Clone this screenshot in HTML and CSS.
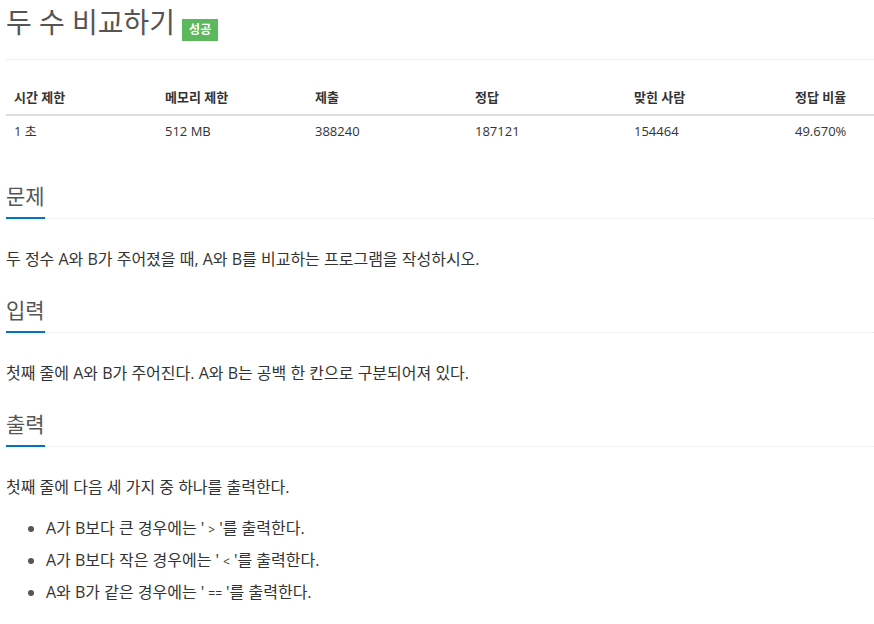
FILE: index.html
```html
<!DOCTYPE html>
<html lang="ko">
<head>
	<meta charset="UTF-8">
	<title>두 수 비교하기</title>
	<link rel="stylesheet" href="styles.css">
</head>
<body>
	<div class="page">
		<div class="page-header">
			<h1><span class="title">두 수 비교하기</span><span class="label">성공</span></h1>
		</div>
		<table class="info">
			<thead>
				<tr>
					<th class="c1">시간 제한</th>
					<th class="c2">메모리 제한</th>
					<th class="c3">제출</th>
					<th class="c4">정답</th>
					<th class="c5">맞힌 사람</th>
					<th class="c6">정답 비율</th>
				</tr>
			</thead>
			<tbody>
				<tr>
					<td>1 초</td>
					<td>512 MB</td>
					<td>388240</td>
					<td>187121</td>
					<td>154464</td>
					<td>49.670%</td>
				</tr>
			</tbody>
		</table>

		<section class="problem">
			<div class="headline"><h2><span>문제</span></h2></div>
			<div class="text">
				<p>두 정수 A와 B가 주어졌을 때, A와 B를 비교하는 프로그램을 작성하시오.</p>
			</div>
		</section>

		<section class="problem">
			<div class="headline"><h2><span>입력</span></h2></div>
			<div class="text">
				<p>첫째 줄에 A와 B가 주어진다. A와 B는 공백 한 칸으로 구분되어져 있다.</p>
			</div>
		</section>

		<section class="problem">
			<div class="headline"><h2><span>출력</span></h2></div>
			<div class="text">
				<p>첫째 줄에 다음 세 가지 중 하나를 출력한다.</p>
				<ul>
					<li>A가 B보다 큰 경우에는 '<code>&gt;</code>'를 출력한다.</li>
					<li>A가 B보다 작은 경우에는 '<code>&lt;</code>'를 출력한다.</li>
					<li>A와 B가 같은 경우에는 '<code>==</code>'를 출력한다.</li>
				</ul>
			</div>
		</section>
	</div>
</body>
</html>
```

FILE: styles.css
```css
*{margin: 0;padding: 0;box-sizing: border-box;}
body{background: #fff;color: #333;font-family: "Open Sans", "Noto Sans CJK KR", sans-serif;font-size: 13px;}
.page{padding: 0 0 0 6px;}

.page-header{padding: 4px 0 19px;border-bottom: 1px solid #eee;}
.page-header h1{display: flex;align-items: flex-end;font-weight: 400;}
.page-header .title{font-size: 28px;color: #555;line-height: 36px;}
.page-header .label{display: inline-block;margin: 0 0 -1px 7px;background: #5cb85c;color: #fff;font-size: 12px;font-weight: 700;line-height: 22px;padding: 0 7px;}

.info{width: 868px;margin: 20px 0 34px;border-collapse: collapse;}
.info th,.info td{text-align: left;padding: 8px;line-height: 18px;}
.info td{padding-top: 6px;}
.info th{font-weight: 700;border-bottom: 2px solid #ddd;}
.info .c1{width: 151px;}
.info .c2{width: 150px;}
.info .c3{width: 160px;}
.info .c4{width: 159px;}
.info .c5{width: 161px;}

.problem{margin-top: 25px;}
.headline h2{font-size: 21px;font-weight: 400;color: #555;line-height: 28px;border-bottom: 1px dotted #e5e5e5;}
.headline h2 span{display: inline-block;padding-bottom: 7px;margin-bottom: -1px;border-bottom: 2px solid #0076c0;}
.text{font-size: 16px;line-height: 24px;padding-top: 28px;}
.text ul{padding-left: 40px;margin-top: 17px;}
.text li{margin-bottom: 8px;line-height: 24px;}
.text li::marker{color: #555;}
.text code{font-family: "Open Sans", sans-serif;font-size: 12px;line-height: 1;padding: 0 4px;}
```
